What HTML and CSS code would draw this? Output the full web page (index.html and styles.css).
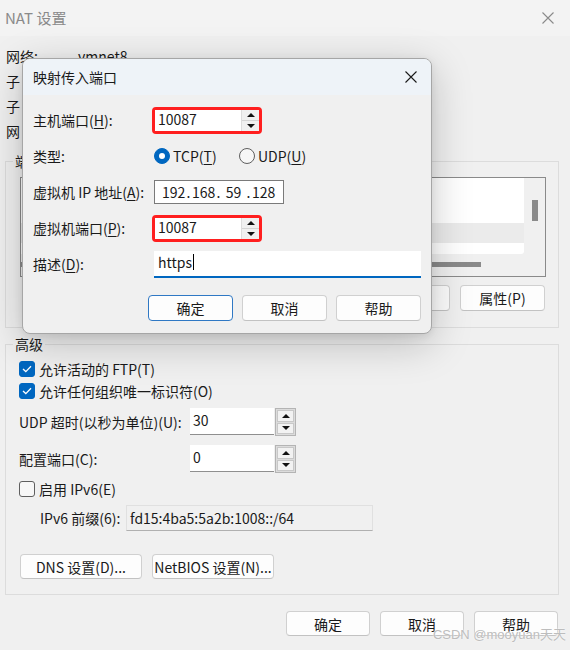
FILE: index.html
```html
<!DOCTYPE html>
<html lang="zh-CN">
<head>
    <meta charset="UTF-8">
    <title>NAT 设置</title>
    <link rel="stylesheet" href="styles.css">
</head>
<body>
    <div class="window">
        <div class="titlebar">
            <span class="title">NAT 设置</span>
            <svg class="close-icon muted" width="12" height="12" viewBox="0 0 12 12">
                <path d="M0.5 0.5 L11.5 11.5 M11.5 0.5 L0.5 11.5" />
            </svg>
        </div>

        <div class="content">
            <!-- most of this block sits under the dialog -->
            <div class="info">
                <div class="info-row"><span class="info-label">网络:</span><span>vmnet8</span></div>
                <div class="info-row"><span class="info-label">子</span></div>
                <div class="info-row"><span class="info-label">子</span></div>
                <div class="info-row"><span class="info-label">网</span></div>
            </div>

            <fieldset class="group forward">
                <legend>端</legend>
                <div class="listbox">
                    <div class="list-area">
                        <div class="list-row"></div>
                        <div class="list-row"></div>
                        <div class="list-row selected"></div>
                    </div>
                    <div class="vscroll"><div class="vthumb"></div></div>
                    <div class="hscroll"><div class="hthumb"></div></div>
                    <div class="corner"></div>
                </div>
                <div class="button-row">
                    <button class="btn"></button>
                    <button class="btn"></button>
                    <button class="btn">属性(P)</button>
                </div>
            </fieldset>

            <fieldset class="group advanced">
                <legend>高级</legend>
                <label class="check-row">
                    <span class="check on">
                        <svg width="10" height="8" viewBox="0 0 10 8"><path d="M1 4 L3.8 6.6 L9 1.2" /></svg>
                    </span>
                    <span>允许活动的 FTP(T)</span>
                </label>
                <label class="check-row">
                    <span class="check on">
                        <svg width="10" height="8" viewBox="0 0 10 8"><path d="M1 4 L3.8 6.6 L9 1.2" /></svg>
                    </span>
                    <span>允许任何组织唯一标识符(O)</span>
                </label>

                <div class="field-row udp">
                    <span class="field-label">UDP 超时(以秒为单位)(U):</span>
                    <div class="spin">
                        <div class="spin-input">30</div>
                        <div class="spin-btns">
                            <span class="spin-btn"><i class="arrow-up"></i></span>
                            <span class="spin-btn"><i class="arrow-down"></i></span>
                        </div>
                    </div>
                </div>
                <div class="field-row port">
                    <span class="field-label">配置端口(C):</span>
                    <div class="spin">
                        <div class="spin-input">0</div>
                        <div class="spin-btns">
                            <span class="spin-btn"><i class="arrow-up"></i></span>
                            <span class="spin-btn"><i class="arrow-down"></i></span>
                        </div>
                    </div>
                </div>

                <label class="check-row ipv6">
                    <span class="check"></span>
                    <span>启用 IPv6(E)</span>
                </label>
                <div class="prefix-row">
                    <span class="prefix-label">IPv6 前缀(6):</span>
                    <div class="prefix-field">fd15:4ba5:5a2b:1008::/64</div>
                </div>

                <div class="setting-buttons">
                    <button class="btn wide">DNS 设置(D)...</button>
                    <button class="btn wide">NetBIOS 设置(N)...</button>
                </div>
            </fieldset>

            <div class="footer">
                <button class="btn">确定</button>
                <button class="btn">取消</button>
                <button class="btn">帮助</button>
            </div>
        </div>

        <div class="watermark">CSDN @mooyuan天天</div>

        <!-- 映射传入端口 dialog, floating over the NAT window -->
        <div class="dialog">
            <div class="dialog-title">
                <span>映射传入端口</span>
                <svg class="close-icon" width="12" height="12" viewBox="0 0 12 12">
                    <path d="M0.5 0.5 L11.5 11.5 M11.5 0.5 L0.5 11.5" />
                </svg>
            </div>
            <div class="dialog-body">
                <div class="form">
                    <span class="form-label">主机端口(<u>H</u>):</span>
                    <div class="mark">
                        <div class="dspin-input">10087</div>
                        <div class="dspin-btns">
                            <span class="dspin-btn"><i class="arrow-up"></i></span>
                            <span class="dspin-btn"><i class="arrow-down"></i></span>
                        </div>
                    </div>

                    <span class="form-label">类型:</span>
                    <div class="radios">
                        <label class="radio-option first"><span class="radio on"></span><span>TCP(<u>T</u>)</span></label>
                        <label class="radio-option"><span class="radio"></span><span>UDP(<u>U</u>)</span></label>
                    </div>

                    <span class="form-label">虚拟机 IP 地址(<u>A</u>):</span>
                    <div class="ip-field">
                        <span class="ip-seg">192</span><span class="ip-dot">.</span><span class="ip-seg">168</span><span class="ip-dot">.</span><span class="ip-seg">59</span><span class="ip-dot">.</span><span class="ip-seg">128</span>
                    </div>

                    <span class="form-label">虚拟机端口(<u>P</u>):</span>
                    <div class="mark">
                        <div class="dspin-input">10087</div>
                        <div class="dspin-btns">
                            <span class="dspin-btn"><i class="arrow-up"></i></span>
                            <span class="dspin-btn"><i class="arrow-down"></i></span>
                        </div>
                    </div>

                    <span class="form-label">描述(<u>D</u>):</span>
                    <div class="desc-field">https<span class="caret"></span></div>
                </div>

                <div class="dialog-buttons">
                    <button class="btn default">确定</button>
                    <button class="btn">取消</button>
                    <button class="btn">帮助</button>
                </div>
            </div>
        </div>
    </div>
</body>
</html>
```

FILE: styles.css
```css
body {
    margin: 0;
    font-family: "Noto Sans CJK SC", "Noto Sans", sans-serif;
    font-size: 14px;
    line-height: 20px;
    color: #1a1a1a;
    background-color: #f0f0f0;
}

u {
    text-underline-offset: 2px;
}

.window {
    position: relative;
    width: 570px;
    height: 650px;
    overflow: hidden;
}

.titlebar {
    height: 36px;
    display: flex;
    align-items: center;
    justify-content: space-between;
    padding: 0 16px 0 5px;
    background-color: #f3f3f3;
}

.title {
    font-size: 15px;
    color: #8a8a8a;
}

.close-icon path {
    stroke: #1a1a1a;
    stroke-width: 1.1;
    fill: none;
}

.close-icon.muted path {
    stroke: #8a8a8a;
}

.content {
    padding: 7px 11px 0 5px;
}

.info-row {
    display: flex;
    align-items: center;
    height: 25px;
    padding-left: 1px;
}

.info-label {
    width: 72px;
}

/* group boxes */
.group {
    margin: 0;
    min-width: 0;
    border: 1px solid #dcdcdc;
}

.group legend {
    padding: 0 2px;
    line-height: 20px;
}

.forward {
    margin-top: 8px;
    padding: 6px 13px 16px 14px;
}

.forward legend {
    margin-left: -7px;
}

.advanced {
    margin-top: 6px;
    padding: 4px 13px 15px 13px;
}

.advanced legend {
    margin-left: -6px;
}

.listbox {
    height: 100px;
    display: grid;
    grid-template-columns: 1fr 21px;
    grid-template-rows: 1fr 22px;
    border: 1px solid #8a8a8a;
    background-color: #f0f0f0;
    box-sizing: border-box;
    margin-right: -1px;
}

.list-area {
    background-color: #fff;
    border-bottom-right-radius: 3px;
    overflow: hidden;
}

.list-row {
    height: 22px;
}

.list-row.selected {
    margin-top: 1px;
    height: 20px;
    background-color: #ebebeb;
}

.vscroll {
    display: flex;
    justify-content: center;
    padding-top: 22px;
}

.vthumb {
    width: 6px;
    height: 21px;
    background-color: #8a8a8a;
}

.hscroll {
    padding: 8px 0 0 0;
}

.hthumb {
    width: 460px;
    height: 5px;
    background-color: #8a8a8a;
}

.button-row {
    display: flex;
    justify-content: flex-end;
    gap: 10px;
    margin-top: 8px;
}

/* buttons */
.btn {
    width: 85px;
    height: 26px;
    padding: 0;
    font-family: inherit;
    font-size: 14px;
    color: #1a1a1a;
    background-color: #fdfdfd;
    border: 1px solid #d0d0d0;
    border-bottom-color: #c2c2c2;
    border-radius: 4px;
}

.btn.default {
    border-color: #2f78c4;
}

.btn.wide {
    width: 122px;
    height: 25px;
}

/* advanced section */
.check-row {
    display: flex;
    align-items: center;
    gap: 4px;
    height: 22px;
}

.check {
    width: 16px;
    height: 16px;
    box-sizing: border-box;
    display: flex;
    align-items: center;
    justify-content: center;
    border: 1px solid #5f5f5f;
    border-radius: 3px;
    background-color: #f7f7f7;
}

.check.on {
    border-color: #0067c0;
    background-color: #0067c0;
}

.check svg path {
    stroke: #fff;
    stroke-width: 1.3;
    fill: none;
}

.field-row {
    display: flex;
    align-items: center;
}

.field-row.udp {
    margin-top: 6px;
}

.field-row.port {
    margin-top: 9px;
}

.field-label {
    width: 171px;
}

.spin {
    display: flex;
}

.spin-input {
    width: 84px;
    height: 27px;
    box-sizing: border-box;
    padding: 2px 3px;
    background-color: #fff;
    border-bottom: 1px solid #8f8f8f;
}

.spin-btns {
    width: 21px;
    height: 28px;
    margin-left: 1px;
    box-sizing: border-box;
    display: flex;
    flex-direction: column;
    gap: 1px;
    padding: 1px;
    border: 1px solid #b4b4b4;
    background-color: #dcdcdc;
}

.spin-btn {
    flex: 1;
    display: flex;
    align-items: center;
    justify-content: center;
    border: 1px solid #c8c8c8;
    background-color: #f2f2f2;
}

.arrow-up,
.arrow-down {
    width: 0;
    height: 0;
    border-left: 4px solid transparent;
    border-right: 4px solid transparent;
}

.arrow-up {
    border-bottom: 4px solid #111;
}

.arrow-down {
    border-top: 4px solid #111;
}

.check-row.ipv6 {
    margin-top: 5px;
}

.prefix-row {
    display: flex;
    align-items: center;
    margin-top: 5px;
    padding-left: 21px;
}

.prefix-label {
    width: 86px;
}

.prefix-field {
    width: 247px;
    height: 26px;
    box-sizing: border-box;
    padding: 2px 3px;
    background-color: #f0f0f0;
    border: 1px solid #e0e0e0;
    border-bottom-color: #b0b0b0;
}

.setting-buttons {
    display: flex;
    gap: 10px;
    margin-top: 23px;
    padding-left: 1px;
}

.footer {
    display: flex;
    justify-content: flex-end;
    gap: 10px;
    margin-top: 16px;
    padding-right: 1px;
}

.footer .btn {
    width: 84px;
    height: 25px;
}

.watermark {
    position: absolute;
    right: 4px;
    bottom: 5px;
    font-family: "Liberation Sans", "Noto Sans CJK SC", sans-serif;
    font-size: 13px;
    color: #bdbdbd;
    text-shadow: 0 0 2px #fff;
}

/* dialog */
.dialog {
    position: absolute;
    left: 22px;
    top: 58px;
    width: 410px;
    box-sizing: border-box;
    border: 1px solid #a6a6a6;
    border-radius: 8px;
    background-color: #f0f0f0;
    overflow: hidden;
    box-shadow: 0 10px 40px rgba(0, 0, 0, 0.22), 0 2px 8px rgba(0, 0, 0, 0.08);
}

.dialog-title {
    height: 36px;
    display: flex;
    align-items: center;
    justify-content: space-between;
    padding: 0 14px 0 10px;
    background-color: #eef3f8;
}

.dialog-body {
    padding: 7px 10px 12px 10px;
}

.form {
    display: grid;
    grid-template-columns: 121px 1fr;
    grid-auto-rows: 36px;
    align-items: center;
}

.mark {
    width: 110px;
    height: 27px;
    box-sizing: border-box;
    margin-left: -2px;
    display: flex;
    border: 3px solid #ff1f1f;
    border-radius: 4px;
}

.dspin-input {
    width: 85px;
    padding: 0 3px;
    line-height: 19px;
    background-color: #fff;
}

.dspin-btns {
    width: 18px;
    display: flex;
    flex-direction: column;
    border-left: 1px solid #dcdcdc;
    background-color: #f0f0f0;
}

.dspin-btn {
    flex: 1;
    display: flex;
    align-items: center;
    justify-content: center;
}

.dspin-btn + .dspin-btn {
    border-top: 1px solid #d4d4d4;
}

.radios {
    display: flex;
    align-items: center;
}

.radio-option {
    display: flex;
    align-items: center;
    gap: 3px;
}

.radio-option.first {
    width: 85px;
}

.radio {
    width: 16px;
    height: 16px;
    box-sizing: border-box;
    display: flex;
    align-items: center;
    justify-content: center;
    border: 1px solid #5f5f5f;
    border-radius: 50%;
    background-color: #f7f7f7;
}

.radio.on {
    border-color: #0067c0;
    background-color: #0067c0;
}

.radio.on::after {
    content: "";
    width: 6px;
    height: 6px;
    border-radius: 50%;
    background-color: #fff;
}

.ip-field {
    width: 130px;
    height: 24px;
    box-sizing: border-box;
    display: flex;
    align-items: center;
    padding-left: 7px;
    background-color: #fff;
    border: 1px solid #7a7a7a;
}

.ip-seg {
    width: 23px;
    text-align: center;
}

.ip-dot {
    width: 7px;
    text-align: center;
}

.desc-field {
    width: 267px;
    height: 27px;
    box-sizing: border-box;
    display: flex;
    align-items: center;
    padding: 0 4px 2px 4px;
    background-color: #fff;
    border-bottom: 2px solid #0067c0;
}

.caret {
    width: 1px;
    height: 16px;
    margin-left: 1px;
    background-color: #000;
}

.dialog-buttons {
    display: flex;
    justify-content: flex-end;
    gap: 9px;
    margin-top: 13px;
}
```
